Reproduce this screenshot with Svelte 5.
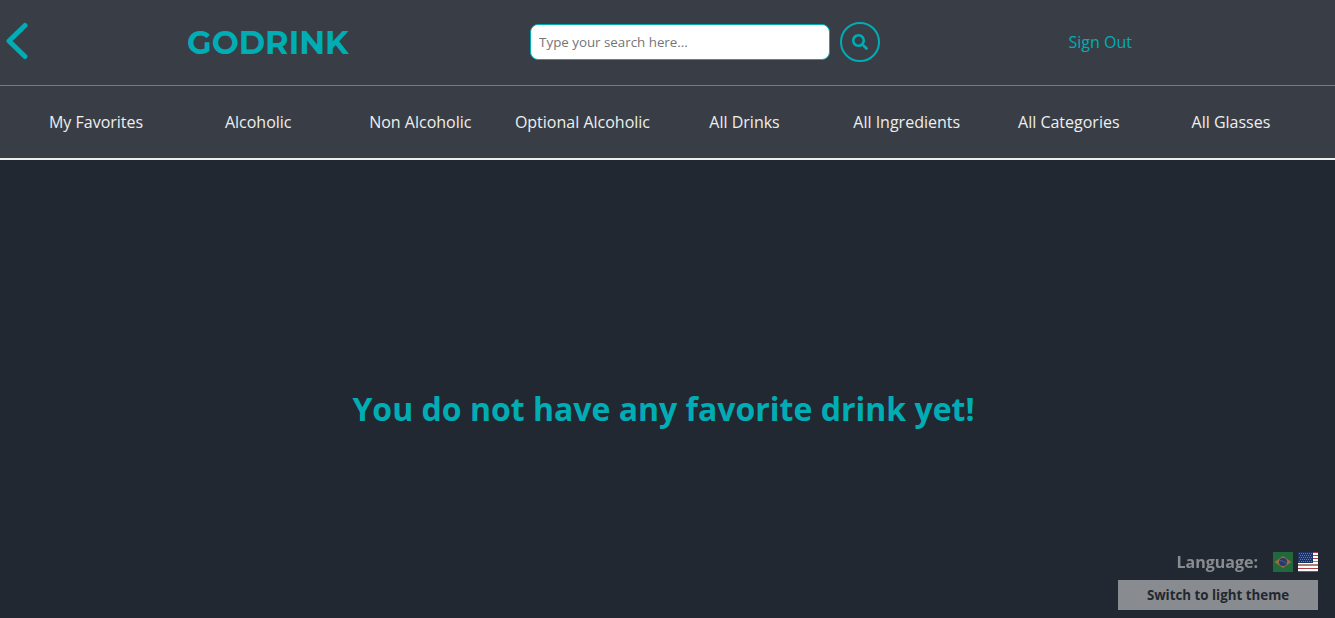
<script>
  const links = [
    'My Favorites',
    'Alcoholic',
    'Non Alcoholic',
    'Optional Alcoholic',
    'All Drinks',
    'All Ingredients',
    'All Categories',
    'All Glasses',
  ];
  let query = $state('');
</script>

<div class="page">
  <header>
    <div class="top">
      <button class="back" type="button" aria-label="Back">
        <svg viewBox="0 0 22 38" width="22" height="38">
          <path d="M19 3.500 3 19l16 15.500" />
        </svg>
      </button>
      <a class="logo" href="#home">GODRINK</a>
      <form onsubmit={(e) => e.preventDefault()}>
        <input type="text" aria-label="Search" placeholder="Type your search here..." bind:value={query} />
        <button class="search" type="submit" aria-label="Submit search">
          <svg viewBox="0 0 512 512" width="16" height="16">
            <path d="M505 442.700 405.300 343c-4.500-4.500-10.600-7-17-7H372c27.600-35.300 44-79.700 44-128C416 93.100 322.900 0 208 0S0 93.100 0 208s93.100 208 208 208c48.300 0 92.700-16.400 128-44v16.300c0 6.400 2.500 12.500 7 17l99.700 99.700c9.400 9.400 24.600 9.400 33.900 0l28.300-28.300c9.400-9.400 9.400-24.600.1-34zM208 336c-70.700 0-128-57.200-128-128 0-70.700 57.200-128 128-128 70.700 0 128 57.200 128 128 0 70.700-57.200 128-128 128z" />
          </svg>
        </button>
      </form>
      <a class="sign" href="#signout">Sign Out</a>
    </div>
    <nav>
      {#each links as link}
        <a href="#{link.toLowerCase().replaceAll(' ', '-')}">{link}</a>
      {/each}
    </nav>
  </header>

  <main>
    <h1>You do not have any favorite drink yet!</h1>
  </main>

  <aside>
    <div class="language">
      <span>Language:</span>
      <button type="button" aria-label="Português">
        <svg viewBox="0 0 20 20" width="20" height="20">
          <path fill="#22683d" d="M0 0h20v20H0z" />
          <path fill="#986c3c" d="m1.500 10 8.500-6 8.500 6-8.500 6z" />
          <circle cx="10" cy="10" r="4" fill="#26386c" />
          <path d="M6.500 8.500q4 0 7 3" fill="none" stroke="#66728c" stroke-width=".7" />
        </svg>
      </button>
      <button type="button" aria-label="English">
        <svg viewBox="0 0 20 20" width="20" height="20" shape-rendering="crispEdges">
          <path fill="#fff" d="M0 0h20v20H0z" />
          <path fill="#b03c48" d="M0 0h20v1H0zM0 3h20v1H0zM0 6h20v1H0zM0 16h20v1H0zM0 19h20v1H0z" />
          <path fill="#a48468" d="M15 9h5v1h-5zM0 12h20v2H0z" />
          <path fill="#1c3468" d="M0 0h15v11H0z" />
          <path stroke="#6c7c9c" stroke-width="1" stroke-dasharray="1 1" d="M1 1.500h13M2 3.500h12M1 5.500h13M2 7.500h12M1 9.500h13" />
        </svg>
      </button>
    </div>
    <button class="theme" type="button">Switch to light theme</button>
  </aside>
</div>

<style>
  :global(body) {
    background: #222831;
  }
  .page {
    display: flex;
    flex-direction: column;
    min-height: 100vh;
    font: 16px/22px 'Open Sans', sans-serif;
  }
  a {
    text-decoration: none;
  }
  button {
    padding: 0;
    border: 0;
    background: none;
    cursor: pointer;
  }
  svg {
    display: block;
  }
  header {
    background: #393e46;
    border-bottom: 2px solid #eee;
  }
  .top {
    position: relative;
    display: flex;
    align-items: center;
    justify-content: space-between;
    height: 84px;
    padding: 0 203px 1px 187px;
    border-bottom: 1px solid #00adb5;
  }
  .back {
    position: absolute;
    left: 6px;
    top: 22px;
  }
  .back path {
    fill: none;
    stroke: #00adb5;
    stroke-width: 5;
    stroke-linecap: round;
    stroke-linejoin: round;
  }
  .logo {
    padding-top: 2px;
    color: #00adb5;
    font: 700 32px/40px Montserrat, Inter, sans-serif;
  }
  form {
    display: flex;
    align-items: center;
    gap: 10px;
    margin-right: 7px;
  }
  input {
    width: 300px;
    height: 36px;
    box-sizing: border-box;
    padding: 0 8px;
    border: 1px solid #00adb5;
    border-radius: 8px;
    background: #fff;
    font-family: 'Open Sans', sans-serif;
  }
  input::placeholder {
    color: #757575;
  }
  .search {
    display: grid;
    place-items: center;
    width: 40px;
    height: 40px;
    border: 2px solid #00adb5;
    border-radius: 50%;
  }
  .search path {
    fill: #00adb5;
  }
  .sign {
    color: #00adb5;
  }
  nav {
    display: grid;
    grid-template-columns: repeat(8, 1fr);
    align-items: center;
    height: 72px;
    padding: 0 23px 0 15px;
  }
  nav a {
    color: #eee;
    text-align: center;
  }
  main {
    flex: 1;
    display: grid;
    place-items: center;
    padding: 40px 8px 0 0;
  }
  h1 {
    margin: 0;
    color: #00adb5;
    font-size: 32px;
    line-height: 44px;
  }
  aside {
    position: fixed;
    right: 17px;
    bottom: 8px;
    width: 200px;
  }
  .language {
    display: flex;
    align-items: center;
    justify-content: flex-end;
    gap: 5px;
    margin-bottom: 7px;
    color: #eee;
    font-weight: 700;
  }
  .language span {
    margin-right: 10px;
    opacity: 0.5;
  }
  .theme {
    display: block;
    width: 100%;
    height: 30px;
    background: #eee;
    color: #222831;
    font-family: 'Open Sans', sans-serif;
    font-weight: 700;
    opacity: 0.5;
  }
</style>
